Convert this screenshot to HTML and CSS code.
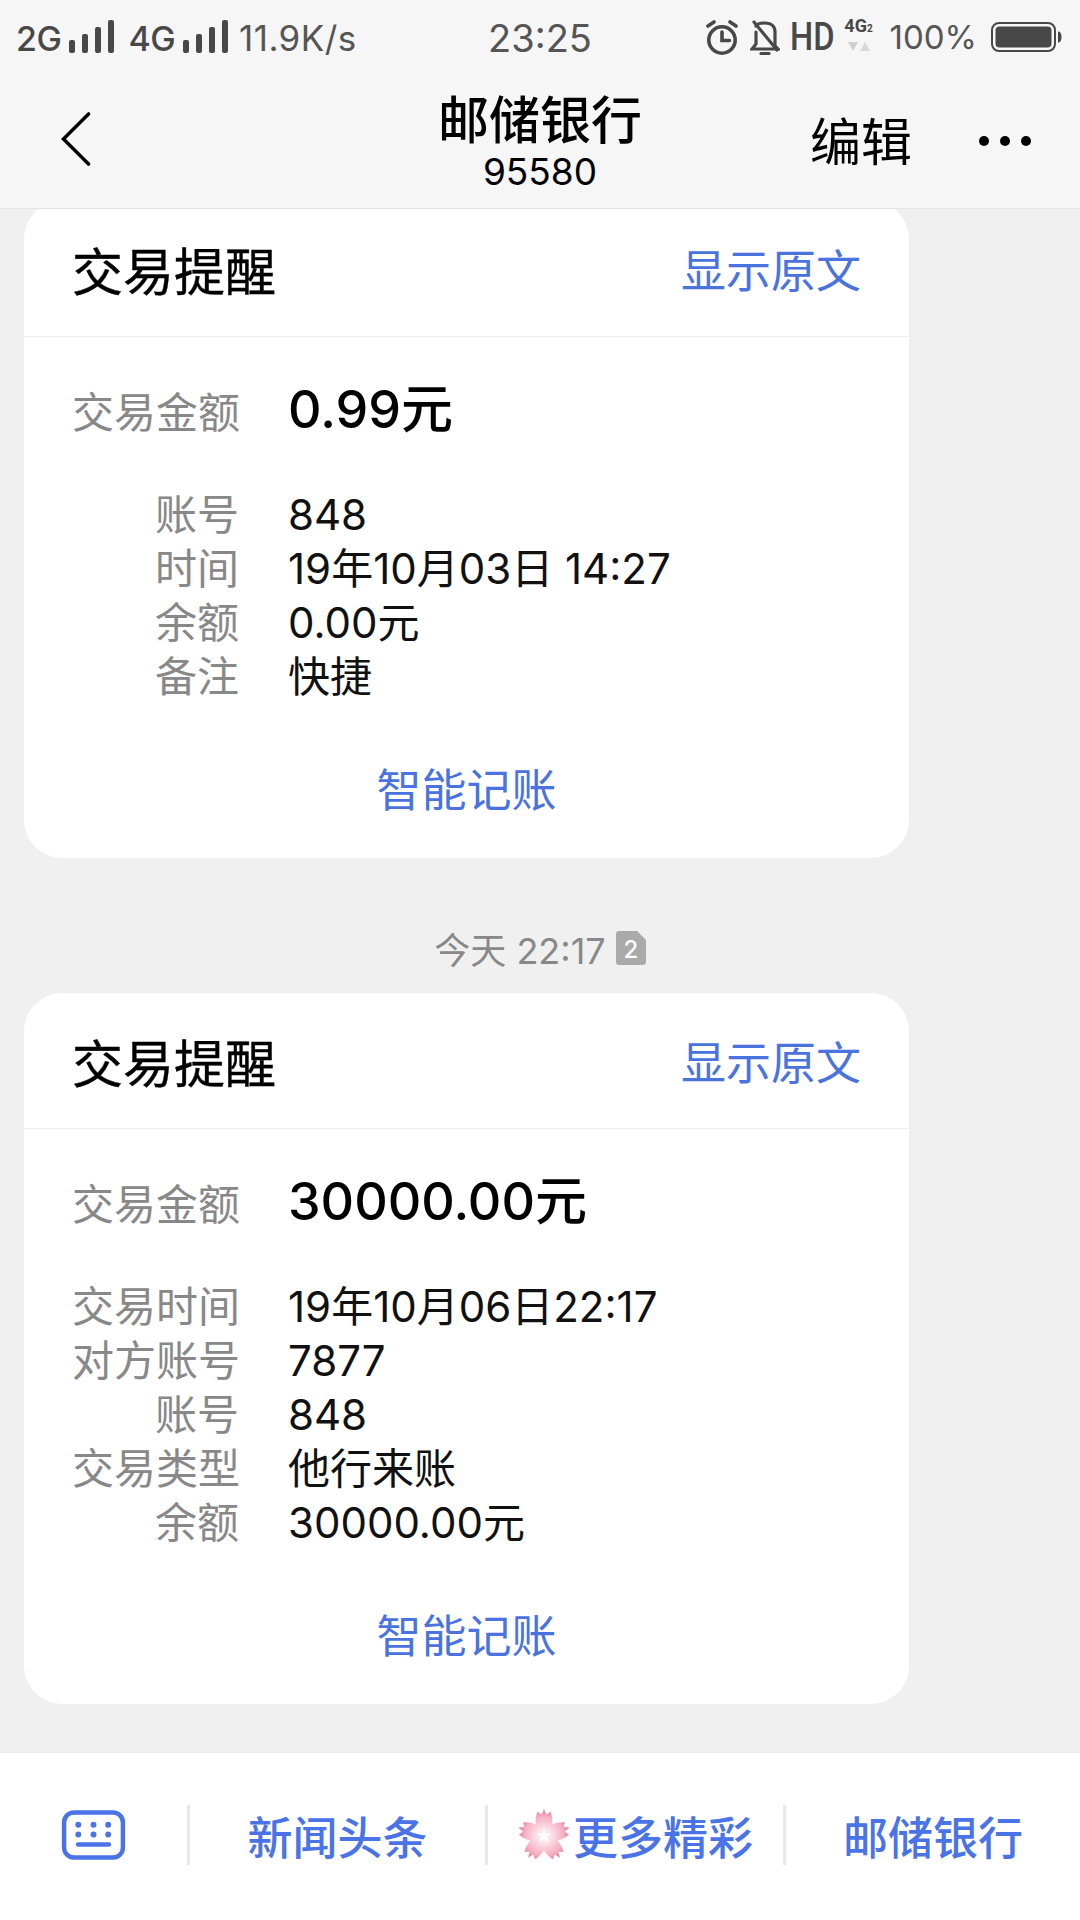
FILE: index.html
```html
<!DOCTYPE html>
<html lang="zh-CN">
<head>
<meta charset="utf-8">
<title>邮储银行</title>
<link rel="stylesheet" href="styles.css">
</head>
<body>
<div class="screen">
  <header class="top">
    <div class="status">
      <div class="status-left">
        <span class="sig">2G</span>
        <svg class="bars" width="45" height="33" viewBox="0 0 45 33"><g fill="#484848"><rect x="0" y="20" width="6" height="13" rx="2"/><rect x="13" y="14" width="6" height="19" rx="2"/><rect x="26" y="7" width="6" height="26" rx="2"/><rect x="39" y="0" width="6" height="33" rx="2"/></g></svg>
        <span class="sig gap">4G</span>
        <svg class="bars" width="45" height="33" viewBox="0 0 45 33"><g fill="#484848"><rect x="0" y="20" width="6" height="13" rx="2"/><rect x="13" y="14" width="6" height="19" rx="2"/><rect x="26" y="7" width="6" height="26" rx="2"/><rect x="39" y="0" width="6" height="33" rx="2"/></g></svg>
        <span class="speed">11.9K/s</span>
      </div>
      <div class="clock">23:25</div>
      <div class="status-right">
        <svg width="34" height="35" viewBox="0 0 34 35"><g fill="none" stroke="#484848" stroke-width="3.6" stroke-linecap="round"><circle cx="17" cy="20" r="13.2"/><path d="M17 12v8.500h7.500"/><path d="M3 6l6-4M31 6l-6-4"/></g></svg>
        <svg class="bell" width="30" height="35" viewBox="0 0 30 35"><g fill="none" stroke="#484848" stroke-width="3.2" stroke-linecap="round"><path d="M6 6C7 4 10 3 15 3c7 0 10 4 10 9v14l3 3H2l4-5V12"/><path d="M4 2l23 28"/><path d="M11 33.500h8"/></g></svg>
        <span class="hd">HD</span>
        <div class="net">
          <span class="net-text">4G<small>2</small></span>
          <svg width="22" height="11" viewBox="0 0 22 11"><path d="M0 1h10l-5 9z" fill="#cfcfcf"/><path d="M12 10h10l-5-9z" fill="#d8d8d8"/></svg>
        </div>
        <span class="pct">100%</span>
        <svg width="71" height="30" viewBox="0 0 71 30"><rect x="1" y="1" width="63" height="28" rx="7" fill="none" stroke="#484848" stroke-width="2"/><rect x="4.500" y="4.500" width="56" height="21" rx="4" fill="#484848"/><path d="M67 9.500c2.500 0 3.500 2 3.500 5.500s-1 5.500-3.500 5.500z" fill="#484848"/></svg>
      </div>
    </div>
    <div class="nav">
      <svg class="back" width="32" height="54" viewBox="0 0 32 56"><path d="M29 2L3 28l26 26" fill="none" stroke="#000" stroke-width="3.600" stroke-linecap="round" stroke-linejoin="miter"/></svg>
      <div class="nav-title">
        <div class="name">邮储银行</div>
        <div class="num">95580</div>
      </div>
      <div class="edit">编辑</div>
      <div class="dots"><i></i><i></i><i></i></div>
    </div>
  </header>

  <main class="list">
    <article class="card first">
      <div class="card-head"><span class="card-title">交易提醒</span><span class="link">显示原文</span></div>
      <div class="card-body">
        <div class="row amount"><span class="label">交易金额</span><span class="value">0.99元</span></div>
        <div class="row"><span class="label">账号</span><span class="value">848</span></div>
        <div class="row"><span class="label">时间</span><span class="value">19年10月03日 14:27</span></div>
        <div class="row"><span class="label">余额</span><span class="value">0.00元</span></div>
        <div class="row"><span class="label">备注</span><span class="value">快捷</span></div>
      </div>
      <div class="card-foot">智能记账</div>
    </article>

    <div class="time">
      <span>今天 22:17</span>
      <svg width="30" height="34" viewBox="0 0 30 34"><path d="M3 0h18l9 9v22a3 3 0 0 1-3 3H3a3 3 0 0 1-3-3V3a3 3 0 0 1 3-3z" fill="#aaa"/><text x="15" y="27" class="sim">2</text></svg>
    </div>

    <article class="card">
      <div class="card-head"><span class="card-title">交易提醒</span><span class="link">显示原文</span></div>
      <div class="card-body">
        <div class="row amount"><span class="label">交易金额</span><span class="value">30000.00元</span></div>
        <div class="row"><span class="label">交易时间</span><span class="value">19年10月06日22:17</span></div>
        <div class="row"><span class="label">对方账号</span><span class="value">7877</span></div>
        <div class="row"><span class="label">账号</span><span class="value">848</span></div>
        <div class="row"><span class="label">交易类型</span><span class="value">他行来账</span></div>
        <div class="row"><span class="label">余额</span><span class="value">30000.00元</span></div>
      </div>
      <div class="card-foot">智能记账</div>
    </article>
  </main>

  <footer class="bottom">
    <div class="tab tab-kb">
      <svg width="65" height="50" viewBox="0 0 65 51"><rect x="2.500" y="2.500" width="60" height="46" rx="10" fill="none" stroke="#4a73e8" stroke-width="4.500"/><g fill="#4a73e8"><circle cx="17" cy="15" r="3"/><circle cx="32.500" cy="15" r="3"/><circle cx="47.500" cy="15" r="3"/><circle cx="17" cy="25" r="3"/><circle cx="32.500" cy="25" r="3"/><circle cx="47.500" cy="25" r="3"/><rect x="14.500" y="33" width="36" height="4.500" rx="2.200"/></g></svg>
    </div>
    <div class="tab tab-a">新闻头条</div>
    <div class="tab tab-b">
      <svg width="52" height="52" viewBox="-27 -29 54 56">
        <defs><radialGradient id="sak" gradientUnits="userSpaceOnUse" cx="0" cy="0" r="28"><stop offset="0" stop-color="#fff"/><stop offset=".3" stop-color="#fcdfe7"/><stop offset=".75" stop-color="#f6afc3"/><stop offset="1" stop-color="#e07c9b"/></radialGradient></defs>
        <g fill="url(#sak)">
          <path d="M0 3C-10 -5 -11 -16 -7 -26L-2.500 -23L0 -29L2.500 -23L7 -26C11 -16 10 -5 0 3Z"/>
          <path d="M0 3C-10 -5 -11 -16 -7 -26L-2.500 -23L0 -29L2.500 -23L7 -26C11 -16 10 -5 0 3Z" transform="rotate(72)"/>
          <path d="M0 3C-10 -5 -11 -16 -7 -26L-2.500 -23L0 -29L2.500 -23L7 -26C11 -16 10 -5 0 3Z" transform="rotate(144)"/>
          <path d="M0 3C-10 -5 -11 -16 -7 -26L-2.500 -23L0 -29L2.500 -23L7 -26C11 -16 10 -5 0 3Z" transform="rotate(216)"/>
          <path d="M0 3C-10 -5 -11 -16 -7 -26L-2.500 -23L0 -29L2.500 -23L7 -26C11 -16 10 -5 0 3Z" transform="rotate(288)"/>
        </g>
        <path d="M0 -7V0M-6 -2L0 0M6 -2L0 0M-4 5L0 0M4 5L0 0" stroke="#fff" stroke-width="2" stroke-linecap="round"/>
      </svg>
      <span>更多精彩</span>
    </div>
    <div class="tab tab-c">邮储银行</div>
  </footer>
</div>
</body>
</html>
```

FILE: styles.css
```css
* { box-sizing: border-box; }
html, body { margin: 0; padding: 0; }
body {
  width: 1080px;
  height: 1920px;
  overflow: hidden;
  font-family: "Inter", "Noto Sans CJK SC", sans-serif;
}
.screen {
  width: 1080px;
  height: 1920px;
  display: flex;
  flex-direction: column;
  background: #f0f0f0;
}
.top {
  height: 209px;
  background: #f6f6f6;
  border-bottom: 1px solid #e4e4e4;
  flex: none;
}
.status {
  height: 74px;
  padding: 0 18px 0 16px;
  display: flex;
  align-items: center;
  position: relative;
  color: #484848;
}
.status-left {
  display: flex;
  align-items: center;
  font-size: 32px;
  gap: 8px;
  padding-top: 2px;
}
.status-left .sig { font-size: 34px; letter-spacing: -.5px; font-weight: 500; }
.status-left .gap { margin-left: 6px; }
.status-left .bars { margin-top: -4px; }
.status-left .speed { margin-left: 3px; color: #555; font-size: 35px; letter-spacing: .4px; }
.clock {
  font-size: 38px;
  color: #555;
  position: absolute;
  left: 0;
  right: 0;
  text-align: center;
  padding-top: 2px;
}
.status-right {
  margin-left: auto;
  display: flex;
  align-items: center;
}
.bell { margin-left: 11px; }
.hd { width: 41px; font-size: 38px; font-weight: 500; margin-left: 10px; font-family: "Roboto", sans-serif; transform: scaleX(.86); transform-origin: left; }
.net {
  width: 36px;
  margin-left: 10px;
  display: flex;
  flex-direction: column;
  align-items: center;
  gap: 2px;
  margin-top: -6px;
}
.net-text { font-size: 18px; line-height: 20px; font-weight: 700; color: #484848; font-family: "Roboto", sans-serif; white-space: nowrap; }
.net-text small { font-size: 10px; }
.pct { font-size: 33px; margin: 0 14px 0 13px; color: #555; }
.nav {
  height: 134px;
  display: flex;
  align-items: center;
  padding: 0 49px 0 60px;
  position: relative;
}
.back { margin-top: -4px; }
.nav-title {
  position: absolute;
  left: 0;
  right: 0;
  top: 18px;
  text-align: center;
  color: #000;
}
.name { font-size: 51px; line-height: 58px; font-weight: 500; }
.num { font-size: 37px; line-height: 44px; }
.edit { margin-left: auto; font-size: 51px; line-height: 60px; color: #000; margin-top: 4px; }
.dots { display: flex; gap: 11px; margin-left: 67px; margin-top: 0; }
.dots i { display: block; width: 10px; height: 10px; border-radius: 50%; background: #000; }
.list {
  flex: 1;
  min-height: 0;
  overflow: hidden;
  padding: 0 24px;
}
.card {
  width: 885px;
  background: #fff;
  border-radius: 38px;
}
.card.first { margin-top: -8px; }
.card-head {
  height: 136px;
  padding: 0 48px;
  border-bottom: 1px solid #f0f0f0;
  display: flex;
  align-items: center;
  justify-content: space-between;
}
.card-title { font-size: 51px; color: #000; -webkit-text-stroke: .4px #000; }
.link { font-size: 45px; color: #4a73e0; }
.card-body { padding: 38px 0 0 48px; }
.row {
  display: flex;
  align-items: baseline;
  height: 54px;
  line-height: 54px;
  font-size: 42px;
}
.label {
  width: 167px;
  text-align: right;
  color: #888;
  white-space: nowrap;
  flex: none;
}
.value {
  margin-left: 49px;
  color: #111;
  white-space: nowrap;
}
.amount { height: 69px; line-height: 69px; margin-bottom: 44px; }
.amount .value { font-size: 52px; font-weight: 500; color: #000; }
.card-foot {
  height: 131px;
  margin-top: 23px;
  padding-bottom: 11px;
  display: flex;
  align-items: center;
  justify-content: center;
  font-size: 45px;
  color: #4a73e0;
}
.time {
  height: 135px;
  padding-top: 44px;
  display: flex;
  align-items: center;
  justify-content: center;
  gap: 10px;
  font-size: 36px;
  color: #888;
}
.sim { font-size: 24px; fill: #fff; text-anchor: middle; font-weight: 500; }
.bottom {
  height: 168px;
  flex: none;
  background: #fff;
  border-top: 1px solid #ececec;
  display: grid;
  grid-template-columns: 187px 298px 298px 1fr;
  padding-top: 52px;
  align-items: start;
}
.tab {
  height: 60px;
  display: flex;
  align-items: center;
  justify-content: center;
  font-size: 45px;
  font-weight: 500;
  color: #4a73e8;
  border-left: 3px solid #e8e8e8;
}
.tab-kb { border-left: none; }
.tab-b span { margin-left: 3px; }
```
